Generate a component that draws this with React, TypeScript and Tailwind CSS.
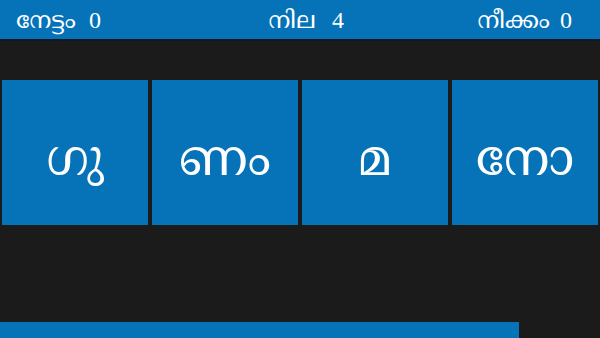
const tiles = ['ഗു', 'ണം', 'മ', 'നോ'];

export default function App() {
  return (
    <div className="w-[600px] h-[338px] bg-[#1b1b1b] flex flex-col overflow-hidden font-['Liberation_Serif','Noto_Serif_Malayalam','Noto_Sans_Malayalam',serif] text-white">
      {/* score bar */}
      <div className="h-[41px] bg-[#0673b8] border-b-2 border-[#0d1a24] flex items-center justify-between pl-[16px] pr-[28px] text-[24px] leading-none">
        <div className="flex items-center gap-[13px]">
          <span>നേട്ടം</span>
          <span>0</span>
        </div>
        <div className="flex items-center gap-[16px] ml-[34px]">
          <span>നില</span>
          <span>4</span>
        </div>
        <div className="flex items-center gap-[10px]">
          <span>നീക്കം</span>
          <span>0</span>
        </div>
      </div>

      {/* letter tiles */}
      <div className="mt-[39px] px-[2px] grid grid-cols-4 gap-[4px]">
        {tiles.map((t) => (
          <div key={t} className="h-[145px] bg-[#0673b8] flex items-center justify-center pt-[10px] text-[50px] leading-none">
            {t}
          </div>
        ))}
      </div>

      {/* progress */}
      <div className="mt-auto h-[16px] w-[519px] bg-[#0673b8]" />
    </div>
  );
}
